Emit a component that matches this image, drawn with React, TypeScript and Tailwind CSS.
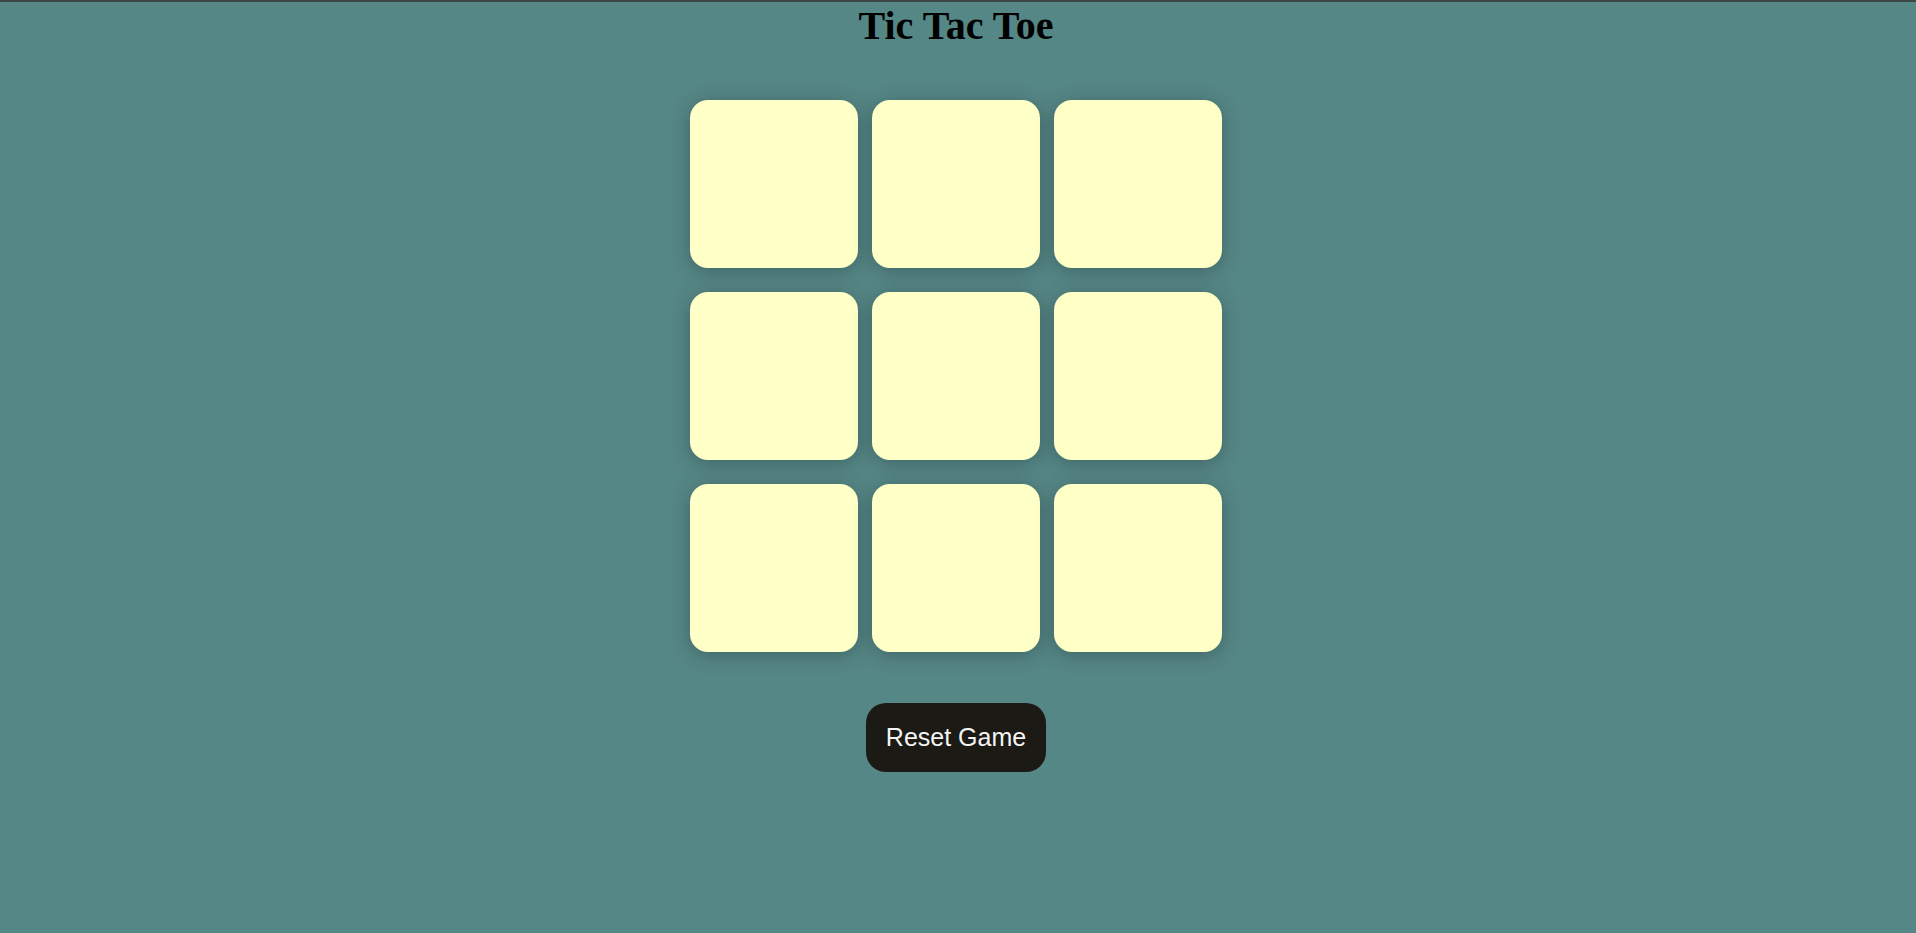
import { useState } from "react";

type Cell = "X" | "O" | null;

function App() {
  const [board, setBoard] = useState<Cell[]>(Array(9).fill(null));
  const [turn, setTurn] = useState<"X" | "O">("X");

  const handleClick = (i: number) => {
    if (board[i]) return;
    const next = [...board];
    next[i] = turn;
    setBoard(next);
    setTurn(turn === "X" ? "O" : "X");
  };

  const reset = () => {
    setBoard(Array(9).fill(null));
    setTurn("X");
  };

  return (
    <main className="min-h-screen bg-[#558786] border-t-2 border-[#3d4747] flex flex-col items-center pr-1">
      <h1 className="mt-[1px] font-['Liberation_Serif','Times_New_Roman',serif] font-bold text-[40px] leading-[46px] text-black">
        Tic Tac Toe
      </h1>

      <div className="mt-[51px] grid grid-cols-[repeat(3,168px)] gap-x-[14px] gap-y-[24px]">
        {board.map((cell, i) => (
          <button
            key={i}
            onClick={() => handleClick(i)}
            className="h-[168px] w-[168px] rounded-[18px] bg-[#ffffc8] shadow-[0_3px_20px_rgba(0,0,0,0.26)] flex items-center justify-center font-['Liberation_Sans',Arial,sans-serif] text-[72px] font-bold text-[#1b1a14]"
          >
            {cell}
          </button>
        ))}
      </div>

      <button
        onClick={reset}
        className="mt-[51px] rounded-[20px] bg-[#1b1a14] px-[20px] py-[21px] font-['Liberation_Sans',Arial,sans-serif] text-[25px] leading-[27px] text-[#f4f4f4]"
      >
        Reset Game
      </button>
    </main>
  );
}

export default App;
